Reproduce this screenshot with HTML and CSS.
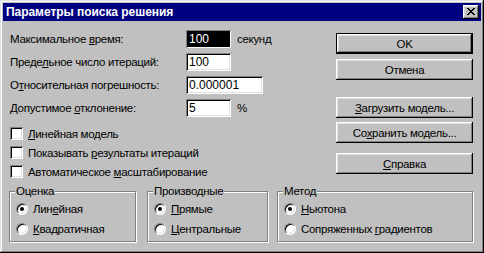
FILE: index.html
```html
<!DOCTYPE html>
<html>
<head>
    <meta charset="utf-8">
    <title>Параметры поиска решения</title>
    <link rel="stylesheet" href="styles.css">
</head>
<body>
<div class="window">
    <div class="titlebar">
        <span class="title">Параметры поиска решения</span>
        <span class="close">
            <svg width="8" height="7" viewBox="0 0 8 7" shape-rendering="crispEdges"><path d="M0 0h2v1h-2z M6 0h2v1h-2z M1 1h2v1h-2z M5 1h2v1h-2z M2 2h4v1h-4z M3 3h2v1h-2z M2 4h4v1h-4z M1 5h2v1h-2z M5 5h2v1h-2z M0 6h2v1h-2z M6 6h2v1h-2z"/></svg>
        </span>
    </div>
    <div class="content">
        <div class="top">
            <div class="form">
                <div class="field">
                    <span class="label">Максимальное <u>в</u>ремя:</span>
                    <span class="input selected">100</span>
                    <span class="unit">секунд</span>
                </div>
                <div class="field">
                    <span class="label">Преде<u>л</u>ьное число итераций:</span>
                    <span class="input">100</span>
                </div>
                <div class="field">
                    <span class="label">О<u>т</u>носительная погрешность:</span>
                    <span class="input wide">0.000001</span>
                </div>
                <div class="field">
                    <span class="label">Допустимое <u>о</u>тклонение:</span>
                    <span class="input">5</span>
                    <span class="unit">%</span>
                </div>
                <div class="checks">
                    <div class="check"><span class="box"></span><span><u>Л</u>инейная модель</span></div>
                    <div class="check"><span class="box"></span><span>Показывать <u>р</u>езультаты итераций</span></div>
                    <div class="check"><span class="box"></span><span>Автоматическое <u>м</u>асштабирование</span></div>
                </div>
            </div>
            <div class="buttons">
                <div class="btn default">OK</div>
                <div class="btn cancel">Отмена</div>
                <div class="btn load"><span><u>З</u>агрузить модель...</span></div>
                <div class="btn save"><span>Со<u>х</u>ранить модель...</span></div>
                <div class="btn help"><span><u>С</u>правка</span></div>
            </div>
        </div>
        <div class="groups">
            <div class="group estimate">
                <div class="legend">Оценка</div>
                <div class="radio"><span class="dot on"></span><span>Лин<u>е</u>йная</span></div>
                <div class="radio"><span class="dot"></span><span><u>К</u>вадратичная</span></div>
            </div>
            <div class="group derivs">
                <div class="legend">Производные</div>
                <div class="radio"><span class="dot on"></span><span><u>П</u>рямые</span></div>
                <div class="radio"><span class="dot"></span><span><u>Ц</u>ентральные</span></div>
            </div>
            <div class="group method">
                <div class="legend">Метод</div>
                <div class="radio"><span class="dot on"></span><span><u>Н</u>ьютона</span></div>
                <div class="radio"><span class="dot"></span><span>Сопряженных <u>г</u>радиентов</span></div>
            </div>
        </div>
    </div>
</div>
</body>
</html>
```

FILE: styles.css
```css
body {
    margin: 0;
    background: #c0c0c0;
    color: #000;
    font-family: "Liberation Sans", Arial, sans-serif;
    font-size: 11.5px;
    letter-spacing: -0.3px;
}

.window {
    width: 484px;
    height: 253px;
    box-sizing: border-box;
    padding: 3px;
    background: #c0c0c0;
    box-shadow: inset -1px -1px #000, inset 1px 1px #dfdfdf,
                inset -2px -2px #808080, inset 2px 2px #fff;
}

/* title bar */
.titlebar {
    height: 18px;
    display: flex;
    align-items: center;
    padding: 0 2px 0 3px;
    background: #000080;
    color: #fff;
}
.title {
    flex: 1;
    font-weight: bold;
    font-size: 12px;
    letter-spacing: -0.05px;
}
.close {
    width: 16px;
    height: 14px;
    display: flex;
    align-items: center;
    justify-content: center;
    background: #c0c0c0;
    box-shadow: inset -1px -1px #000, inset 1px 1px #fff,
                inset -2px -2px #808080, inset 2px 2px #dfdfdf;
}
.close svg {
    margin: -1px 0 0 -1px;
}

/* body */
.content {
    padding: 9px 0 0 6px;
}
.top {
    display: flex;
}
.form {
    width: 326px;
    padding-left: 1px;
}
.field {
    display: flex;
    align-items: center;
    height: 18px;
    margin-bottom: 5px;
}
.label {
    width: 176px;
}
.input {
    width: 45px;
    height: 18px;
    box-sizing: border-box;
    padding-left: 3px;
    line-height: 18px;
    font-size: 12px;
    letter-spacing: 0;
    background: #fff;
    box-shadow: inset 1px 1px #808080, inset -1px -1px #fff,
                inset 2px 2px #000, inset -2px -2px #dfdfdf;
}
.input.wide {
    width: 77px;
}
.input.selected {
    background: #000;
    color: #fff;
    box-shadow: inset 1px 1px #808080, inset -1px -1px #fff;
}
.unit {
    margin-left: 6px;
}

.checks {
    margin-top: 7px;
}
.check {
    display: flex;
    align-items: center;
    height: 19px;
}
.box {
    width: 13px;
    height: 13px;
    box-sizing: border-box;
    margin-right: 5px;
    background: #fff;
    box-shadow: inset 1px 1px #808080, inset -1px -1px #fff,
                inset 2px 2px #000, inset -2px -2px #dfdfdf;
}

/* buttons */
.buttons {
    width: 137px;
    padding-top: 3px;
    display: flex;
    flex-direction: column;
}
.btn {
    height: 21px;
    box-sizing: border-box;
    display: flex;
    align-items: center;
    justify-content: center;
    background: #c0c0c0;
    box-shadow: inset -1px -1px #000, inset 1px 1px #fff,
                inset -2px -2px #808080, inset 2px 2px #dfdfdf;
}
.btn.default {
    box-shadow: inset 0 0 0 1px #000, inset -2px -2px #000, inset 2px 2px #fff,
                inset -3px -3px #808080, inset 3px 3px #dfdfdf;
}
.btn.cancel { margin-top: 5px; }
.btn.load { margin-top: 17px; }
.btn.save { margin-top: 4px; }
.btn.help { margin-top: 10px; }

/* group boxes */
.groups {
    display: flex;
    margin-top: 10px;
}
.group {
    height: 51px;
    box-sizing: border-box;
    border: 1px solid #808080;
    box-shadow: inset 1px 1px #fff, 1px 1px #fff;
}
.estimate { width: 127px; }
.derivs { width: 121px; margin-left: 11px; }
.method { width: 196px; margin-left: 9px; }

.legend {
    display: table;
    margin: -7px 0 1px 5px;
    padding: 0 1px;
    line-height: 13px;
    background: #c0c0c0;
}
.radio {
    display: flex;
    align-items: center;
    height: 20px;
    padding-left: 6px;
}
.dot {
    position: relative;
    width: 12px;
    height: 12px;
    box-sizing: border-box;
    margin-right: 5px;
    border-radius: 50%;
    border: 1px solid;
    border-color: #808080 #fff #fff #808080;
    background: #fff;
    box-shadow: inset 1px 1px #000, inset -1px -1px #dfdfdf;
}
.dot.on::after {
    content: "";
    position: absolute;
    left: 3px;
    top: 3px;
    width: 4px;
    height: 4px;
    border-radius: 50%;
    background: #000;
}
```
